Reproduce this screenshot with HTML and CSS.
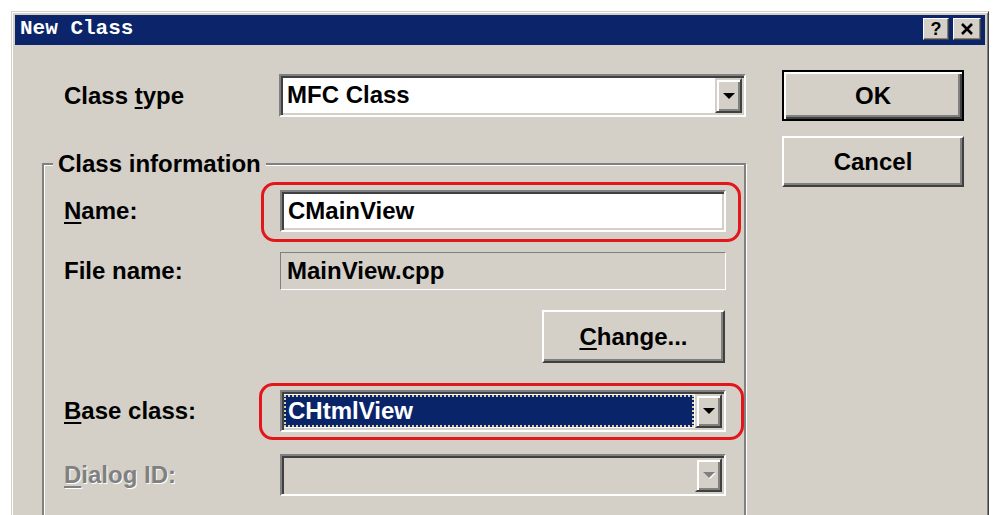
FILE: index.html
```html
<!DOCTYPE html>
<html lang="en">
<head>
    <meta charset="UTF-8">
    <title>New Class</title>
    <link rel="stylesheet" href="styles.css">
</head>
<body>
    <div class="window">
        <div class="titlebar">
            <span class="title">New Class</span>
            <div class="caption-btns">
                <button class="cap help">?</button>
                <button class="cap close">
                    <svg width="14" height="12" viewBox="0 0 14 12"><path d="M2 1 L12 11 M12 1 L2 11" stroke="#000" stroke-width="2.6" fill="none"/></svg>
                </button>
            </div>
        </div>

        <div class="client">
            <div class="form">
                <div class="type-row">
                    <label class="lbl">Class <u>t</u>ype</label>
                    <div class="combo wide">
                        <span class="combo-text">MFC Class</span>
                        <span class="drop"><i class="arrow"></i></span>
                    </div>
                </div>

                <fieldset class="group">
                    <legend>Class information</legend>

                    <div class="row name-row">
                        <label class="lbl"><u>N</u>ame:</label>
                        <div class="mark mark-name">
                            <div class="edit">CMainView</div>
                        </div>
                    </div>

                    <div class="row file-row">
                        <label class="lbl">File name:</label>
                        <div class="edit readonly">MainView.cpp</div>
                    </div>

                    <div class="row change-row">
                        <button class="btn change"><u>C</u>hange...</button>
                    </div>

                    <div class="row base-row">
                        <label class="lbl"><u>B</u>ase class:</label>
                        <div class="mark mark-base">
                            <div class="combo">
                                <span class="combo-text selected">CHtmlView</span>
                                <span class="drop"><i class="arrow"></i></span>
                            </div>
                        </div>
                    </div>

                    <div class="row dialog-row">
                        <label class="lbl disabled"><u>D</u>ialog ID:</label>
                        <div class="combo off">
                            <span class="combo-text"></span>
                            <span class="drop"><i class="arrow"></i></span>
                        </div>
                    </div>
                </fieldset>
            </div>

            <div class="buttons">
                <button class="btn default">OK</button>
                <button class="btn">Cancel</button>
            </div>
        </div>
    </div>
</body>
</html>
```

FILE: styles.css
```css
body {
    margin: 0;
    background: #fff;
    overflow: hidden;
    font-family: "Liberation Sans", Arial, sans-serif;
    font-weight: bold;
    font-size: 24px;
    color: #000;
}
u {
    text-decoration-thickness: 2px;
    text-underline-offset: 3px;
}
.window {
    margin: 11px 0 0 11px;
    width: 978px;
    height: 520px;
    box-sizing: border-box;
    padding: 3px;
    background: #d4d0c8;
    border: 1px solid;
    border-color: #d4d0c8 #404040 #404040 #d4d0c8;
    box-shadow: inset 1px 1px #fff, inset -1px -1px #808080;
    overflow: hidden;
}

/* title bar */
.titlebar {
    height: 30px;
    background: #0c246a;
    display: flex;
    align-items: center;
    justify-content: space-between;
    padding: 0 4px 3px 5px;
    box-sizing: border-box;
}
.title {
    color: #fff;
    font-family: "Liberation Mono", "Courier New", monospace;
    font-size: 21px;
    font-weight: bold;
    line-height: 1;
}
.caption-btns {
    display: flex;
    gap: 4px;
}
.cap {
    width: 26px;
    height: 22px;
    padding: 0;
    background: #d4d0c8;
    border: 1px solid;
    border-color: #fff #404040 #404040 #fff;
    box-shadow: inset -1px -1px #808080;
    display: flex;
    align-items: center;
    justify-content: center;
    font-family: "Liberation Sans", Arial, sans-serif;
    font-weight: bold;
    font-size: 18px;
    line-height: 1;
}
.cap.close {
    width: 28px;
}

/* dialog body */
.client {
    display: flex;
    padding-left: 27px;
}
.form {
    width: 704px;
}
.lbl {
    width: 216px;
    flex: none;
    line-height: 28px;
}
.type-row {
    display: flex;
    align-items: center;
    margin-top: 29px;
    padding-left: 22px;
}
.type-row .lbl {
    width: 215px;
}

/* sunken controls */
.combo, .edit {
    width: 446px;
    box-sizing: border-box;
    border: 2px solid;
    border-color: #808080 #fff #fff #808080;
    box-shadow: inset 2px 2px #404040, inset -2px -2px #d4d0c8;
    background: #fff;
}
.combo {
    height: 42px;
    display: flex;
    padding: 2px;
}
.combo.wide {
    width: 467px;
    height: 43px;
}
.combo-text {
    flex: 1;
    padding-left: 4px;
    line-height: 34px;
}
.combo-text.selected {
    background: #0a246a;
    color: #fff;
    outline: 2px dotted #d8d0a8;
    outline-offset: -2px;
    margin: 1px 1px 1px 0;
    line-height: 32px;
}
.drop {
    width: 27px;
    box-sizing: border-box;
    background: #d4d0c8;
    border: 2px solid;
    border-color: #d4d0c8 #404040 #404040 #d4d0c8;
    box-shadow: inset 2px 2px #fff, inset -2px -2px #808080;
    display: flex;
    align-items: center;
    justify-content: center;
}
.arrow {
    width: 0;
    height: 0;
    border-left: 6px solid transparent;
    border-right: 6px solid transparent;
    border-top: 6px solid #000;
}
.combo.off {
    background: #d4d0c8;
}
.combo.off .arrow {
    border-top-color: #808080;
    filter: drop-shadow(1px 1px 0 #fff);
}
.edit {
    height: 42px;
    padding: 0 6px;
    line-height: 38px;
}
.edit.readonly {
    height: 38px;
    background: #d4d0c8;
    border-width: 1px;
    box-shadow: none;
    border-color: #808080 #fff #fff #808080;
    line-height: 35px;
}

/* group box */
.group {
    margin: 33px 0 0;
    padding: 12px 18px 40px 20px;
    border: 2px solid #808080;
    box-shadow: 1px 1px 0 #fff, inset 1px 1px 0 #fff;
}
.group legend {
    margin-left: -11px;
    padding: 0 5px;
    line-height: 28px;
    background: #d4d0c8;
}
.row {
    display: flex;
    align-items: center;
}
.file-row {
    margin-top: 20px;
}
.change-row {
    margin-top: 20px;
    justify-content: flex-end;
    padding-right: 1px;
}
.base-row {
    margin-top: 27px;
}
.dialog-row {
    margin-top: 22px;
}
.disabled {
    color: #808080;
    text-shadow: 1px 1px 0 #fff;
}

/* red annotation rings */
.mark {
    position: relative;
}
.mark::after {
    content: "";
    position: absolute;
    border: 3px solid #e3161c;
    border-radius: 14px;
}
.mark-name::after {
    top: -8px;
    bottom: -10px;
    left: -19px;
    right: -15px;
}
.mark-base::after {
    top: -7px;
    bottom: -8px;
    left: -21px;
    right: -18px;
}

/* push buttons */
.btn {
    font-family: "Liberation Sans", Arial, sans-serif;
    font-weight: bold;
    font-size: 24px;
    color: #000;
    width: 182px;
    height: 51px;
    padding: 0;
    background: #d4d0c8;
    border: 2px solid;
    border-color: #fff #404040 #404040 #fff;
    box-shadow: inset -2px -2px #808080;
}
.btn.default {
    border-color: #000;
    box-shadow: inset 2px 2px #fff, inset -2px -2px #404040, inset -4px -4px #808080;
}
.btn.change {
    width: 183px;
    height: 53px;
}
.buttons {
    margin-left: 36px;
    margin-top: 25px;
    display: flex;
    flex-direction: column;
    gap: 15px;
}
```
